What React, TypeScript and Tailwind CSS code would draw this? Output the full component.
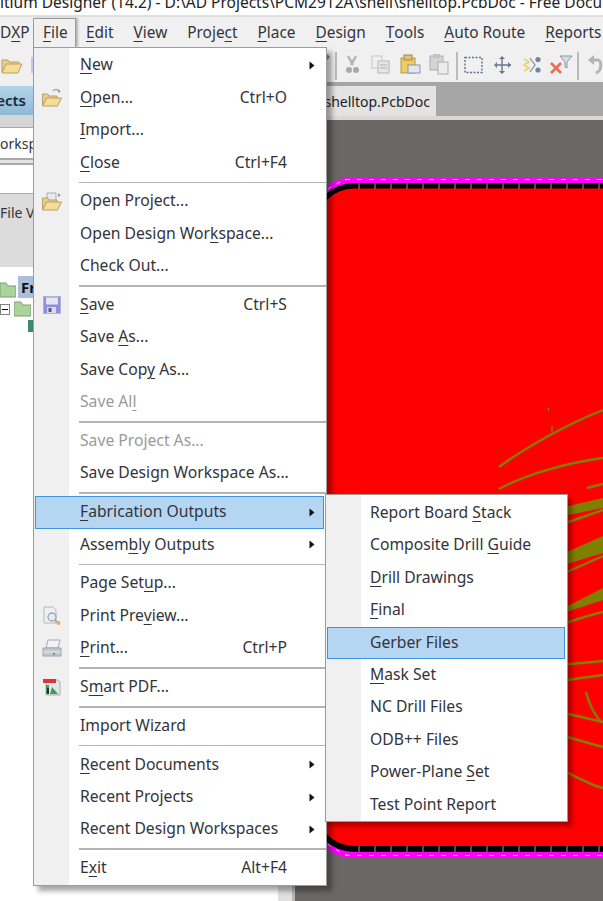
import React from 'react';

const FONT = "font-['Noto_Sans',sans-serif]";

// "&" marks the mnemonic letter, same as the win32 menu resource strings
function Label({ text }: { text: string }) {
    const i = text.indexOf('&');
    if (i < 0) return <>{text}</>;
    return (
        <>
            {text.slice(0, i)}
            <span className="underline decoration-1 underline-offset-[3px]">{text[i + 1]}</span>
            {text.slice(i + 2)}
        </>
    );
}

function FolderOpen({ project }: { project?: boolean }) {
    return (
        <svg width="22" height="20" viewBox="0 0 22 20">
            {project ? (
                <path d="M6 1h9v9H6z" fill="#e8eaf0" stroke="#a9adb8" />
            ) : (
                <path d="M12 3c2-2 4-2 6 0" fill="none" stroke="#a8a8a8" strokeWidth="1.4" />
            )}
            <path d="M17 1l3 2.5-3 1.5z" fill="#9a9a9a" />
            <path d="M1.5 18V6h5l1.5 2h8v3" fill="#e5cd8f" stroke="#b7a069" />
            <path d="M1.5 18l4-8h15l-4 8z" fill="#f6dd95" stroke="#b7a069" />
        </svg>
    );
}

function Floppy() {
    return (
        <svg width="18" height="18" viewBox="0 0 18 18">
            <rect x="0.5" y="0.5" width="17" height="17" fill="#8f8fd8" stroke="#b2b2dc" />
            <rect x="3" y="1.5" width="12" height="7" fill="#e6e6f2" />
            <rect x="4" y="11" width="9" height="6" fill="#d8d8e6" />
            <rect x="5.5" y="12" width="3" height="4" fill="#55558a" />
        </svg>
    );
}

function PrintPreview() {
    return (
        <svg width="20" height="20" viewBox="0 0 20 20">
            <path d="M2 1h9l3 3v13H2z" fill="#eef0f4" stroke="#b4b8c0" />
            <circle cx="10" cy="11" r="4" fill="#e6ebf2" stroke="#a0a5ad" strokeWidth="1.3" />
            <path d="M13 14l3 3" stroke="#a0a5ad" strokeWidth="2" />
            <circle cx="16.5" cy="17" r="2" fill="#eab04a" />
        </svg>
    );
}

function Printer() {
    return (
        <svg width="20" height="19" viewBox="0 0 20 19">
            <path d="M6 1h12l-2 8H4z" fill="#f0f2f6" stroke="#a4aab4" />
            <path d="M1 9h18v8H1z" fill="#c4cad3" stroke="#99a0aa" />
            <path d="M1 13h18" stroke="#e4e7ec" />
            <rect x="11" y="14" width="2" height="1.5" fill="#5c7f5c" />
        </svg>
    );
}

function SmartPdf() {
    return (
        <svg width="18" height="18" viewBox="0 0 18 18">
            <path d="M3 2h12l2 2v13H3z" fill="#dfe8e0" stroke="#a8b0aa" />
            <rect x="0" y="1" width="13" height="4" fill="#d9353a" />
            <path d="M3 16V7h3v9zM7 16l2-7 6 7z" fill="#3f9a5a" />
            <path d="M4 16v-6h2v6z" fill="#23352a" />
        </svg>
    );
}

function Arrow() {
    return (
        <svg width="6" height="9" viewBox="0 0 6 9">
            <path d="M0.5 0.5L5.5 4.5L0.5 8.5z" fill="#111" />
        </svg>
    );
}

type Row = {
    text?: string;
    key?: string;
    sub?: boolean;
    off?: boolean;
    active?: boolean;
    icon?: React.ReactNode;
};

const fileItems: (Row | null)[] = [
    { text: '&New', sub: true },
    { text: '&Open...', key: 'Ctrl+O', icon: <FolderOpen /> },
    { text: '&Import...' },
    { text: '&Close', key: 'Ctrl+F4' },
    null,
    { text: 'Open Project...', icon: <FolderOpen project /> },
    { text: 'Open Design Wor&kspace...' },
    { text: 'Check Out...' },
    null,
    { text: '&Save', key: 'Ctrl+S', icon: <Floppy /> },
    { text: 'Save &As...' },
    { text: 'Save Cop&y As...' },
    { text: 'Save Al&l', off: true },
    null,
    { text: 'Save Project As...', off: true },
    { text: 'Save Design Workspace As...' },
    null,
    { text: '&Fabrication Outputs', sub: true, active: true },
    { text: 'Assem&bly Outputs', sub: true },
    null,
    { text: 'Page Set&up...' },
    { text: 'Print Pre&view...', icon: <PrintPreview /> },
    { text: '&Print...', key: 'Ctrl+P', icon: <Printer /> },
    null,
    { text: 'S&mart PDF...', icon: <SmartPdf /> },
    null,
    { text: 'Import Wizard' },
    null,
    { text: '&Recent Documents', sub: true },
    { text: 'Recent Projects', sub: true },
    { text: 'Recent Design Workspaces', sub: true },
    null,
    { text: 'E&xit', key: 'Alt+F4' },
];

const fabItems: Row[] = [
    { text: 'Report Board &Stack' },
    { text: 'Composite Drill &Guide' },
    { text: '&Drill Drawings' },
    { text: '&Final' },
    { text: 'Gerber Files', active: true },
    { text: '&Mask Set' },
    { text: 'NC Drill Files' },
    { text: 'ODB++ Files' },
    { text: 'Power-Plane &Set' },
    { text: 'Test Point Report' },
];

function MenuRow({ row, gutter }: { row: Row; gutter: number }) {
    return (
        <div className="relative flex h-[32.42px] items-center">
            {row.active && (
                <div className="absolute inset-y-0 left-[1px] right-[2px] border-[1.5px] border-[#3d93e0] bg-[#b5d6f3]" />
            )}
            <div className="relative flex h-full shrink-0 items-center justify-center" style={{ width: gutter }}>
                {row.icon}
            </div>
            <div className={`relative ml-[11px] flex-1 whitespace-nowrap pb-[1px] ${row.off ? 'text-[#9a9a9a]' : 'text-[#33343a]'}`}>
                <Label text={row.text || ''} />
            </div>
            {row.key && <div className="relative mr-[39px] pb-[1px] text-[#33343a]">{row.key}</div>}
            {row.sub && (
                <div className="relative mr-[11px] flex items-center">
                    <Arrow />
                </div>
            )}
        </div>
    );
}

function FileMenu() {
    return (
        <div className="absolute left-[33px] top-[47px] w-[294px] border border-[#9b9b9b] bg-[linear-gradient(to_right,#f0f0f0_35px,#ffffff_35px)] pt-[1.5px] pb-[0.5px] text-[15.7px] shadow-[5px_5px_5px_rgba(0,0,0,0.35)]">
            {fileItems.map((row, i) =>
                row ? (
                    <MenuRow key={i} row={row} gutter={35} />
                ) : (
                    <div key={i} className="flex h-[6.4px] items-center pl-[45px]">
                        <div className="h-[1.5px] w-full bg-[#b4b4b4]" />
                    </div>
                ),
            )}
        </div>
    );
}

function FabMenu() {
    return (
        <div className="absolute left-[325px] top-[494px] w-[243px] border border-[#9b9b9b] bg-[linear-gradient(to_right,#f0f0f0_35px,#ffffff_35px)] pt-[2px] text-[15.7px] shadow-[4px_4px_5px_rgba(0,0,0,0.35)]">
            {fabItems.map((row, i) => (
                <MenuRow key={i} row={row} gutter={33} />
            ))}
        </div>
    );
}

function MenuBar() {
    const names = ['&Edit', '&View', 'Proje&ct', '&Place', '&Design', '&Tools', '&Auto Route', '&Reports'];
    return (
        <div className="flex h-[32px] items-end border-t-2 border-[#e0e0e0] bg-[#f0f0f0] text-[15.4px] text-[#33343a]">
            <div className="flex h-[29px] w-[33px] shrink-0 items-center">
                <Label text="D&XP" />
            </div>
            <div className="flex h-[29px] w-[43px] shrink-0 items-center border border-b-0 border-[#9b9b9b] pl-[9px] shadow-[2px_0_2px_rgba(0,0,0,0.25)]">
                <Label text="&File" />
            </div>
            {names.map((n) => (
                <div key={n} className="flex h-[29px] shrink-0 items-center whitespace-nowrap px-[10px]">
                    <Label text={n} />
                </div>
            ))}
        </div>
    );
}

function ToolbarIcons() {
    return (
        <svg className="absolute left-0 top-0" width="603" height="35" viewBox="0 47 603 35">
            {/* left of the dropdown */}
            <path d="M2 72V60h6l1 2h10v2" fill="#e5cd8f" stroke="#b7a069" />
            <path d="M2 73l4-9h16l-4 9z" fill="#f6dd95" stroke="#b7a069" />
            <rect x="31" y="57" width="3" height="16" fill="#c8c4ea" />
            <path d="M327 54l3 3-3 3z" fill="#8b8b8b" />
            {/* separators */}
            <path d="M336 52v28M457 52v28M578 52v28" stroke="#a8a8a8" strokeWidth="1.5" />
            {/* cut */}
            <path d="M348 56l5 9M356 56l-5 9" stroke="#b4b4b4" strokeWidth="2.5" />
            <circle cx="349" cy="70" r="3" fill="#a8a8a8" />
            <circle cx="356" cy="70" r="3" fill="#a8a8a8" />
            {/* copy */}
            <rect x="372" y="56" width="10" height="12" fill="#f0f0f0" stroke="#c4c4c4" />
            <rect x="378" y="61" width="11" height="12" fill="#e6e6e6" stroke="#b5b5b5" />
            <path d="M380 65h7M380 68h7" stroke="#b0b0b0" />
            {/* paste */}
            <rect x="401" y="58" width="14" height="15" fill="#efcb63" stroke="#b79a4a" />
            <rect x="404" y="55" width="8" height="5" fill="#d9c27a" stroke="#a08a4a" />
            <rect x="408" y="65" width="12" height="8" fill="#dfe6f0" stroke="#8b95a5" />
            {/* paste disabled */}
            <rect x="430" y="56" width="13" height="14" fill="#d4d4d4" stroke="#b0b0b0" />
            <rect x="433" y="54" width="7" height="4" fill="#c4c4c4" />
            <rect x="438" y="62" width="10" height="12" fill="#ececec" stroke="#acacac" />
            {/* marquee */}
            <rect x="465" y="57.5" width="17" height="15" fill="none" stroke="#5f6f8f" strokeWidth="1.4" strokeDasharray="2 1.5" />
            {/* move */}
            <path d="M502 57v16M495 65h16" stroke="#66788f" strokeWidth="1.4" />
            <path d="M502 56l-3 3h6zM502 74l-3-3h6zM494 65l3-3v6zM511 65l-3-3v6z" fill="#66788f" />
            {/* cross select */}
            <path d="M524 59l5 3-5 3 5 3-5 3" fill="none" stroke="#e6d77a" strokeWidth="2" />
            <path d="M530 58l5 7-5 7" fill="none" stroke="#7c8ea8" strokeWidth="1.2" />
            <circle cx="538" cy="59.5" r="2.6" fill="#6f85a6" />
            <circle cx="538" cy="70" r="2.6" fill="#6f85a6" />
            {/* clear filter */}
            <path d="M551 63l10 10M561 63l-10 10" stroke="#ee6a50" strokeWidth="2.6" />
            <path d="M560 56h12l-5 6v6l-2-1v-5z" fill="#d5dee8" stroke="#8a97a6" />
            {/* undo */}
            <path d="M590 60h8c4 0 4 11-2 13" fill="none" stroke="#b4b4b4" strokeWidth="3" />
            <path d="M594 55v10l-6-5z" fill="#b4b4b4" />
        </svg>
    );
}

function LeftPanel() {
    return (
        <div className="flex w-[278px] shrink-0 flex-col overflow-hidden bg-white text-[15px] text-[#33343a]">
            <div className="h-[4px] bg-[#f0f0f0]" />
            <div className="flex h-[29px] items-center justify-end bg-[linear-gradient(#b3d3e8,#8fb9d6)] pr-[252px] font-semibold text-[#1c2b3a]">
                ects
            </div>
            <div className="h-[13px] border-b border-[#a8a8a8] bg-[#d6d6d6]" />
            <div className="flex h-[30px] items-center overflow-hidden whitespace-nowrap bg-white text-[14px]">
                orkspace
            </div>
            <div className="h-[7px] border-y-2 border-[#a8a8a8] bg-[#e2e2e2]" />
            <div className="h-[28px] bg-white" />
            <div className="h-[74px] border-t border-[#a8a8a8] bg-[#dcdcdc] pt-[8px] text-[14px]">
                File Vi
            </div>
            <div className="flex h-[32px] items-end gap-[2px] pb-[1px]">
                <svg width="16" height="16" viewBox="0 0 16 16">
                    <path d="M0 15V1h6l2 3h8v11z" fill="#a9d49a" stroke="#7f9a74" />
                </svg>
                <div className="flex h-[22px] w-[60px] items-center bg-[#a8c0dc] pl-[3px] font-bold text-[#111]">Fr</div>
            </div>
            <div className="flex h-[20px] items-center gap-[4px]">
                <div className="flex h-[11px] w-[10px] items-center justify-center border border-[#808080] bg-white">
                    <div className="h-[1px] w-[6px] bg-black" />
                </div>
                <svg width="17" height="16" viewBox="0 0 17 16">
                    <path d="M0 15V1h7l2 3h8v11z" fill="#a9d49a" stroke="#7f9a74" />
                </svg>
            </div>
            <div className="pl-[28px] pt-[1px]">
                <div className="h-[12px] w-[10px] bg-[#3e8a6a]" />
            </div>
        </div>
    );
}

function Board() {
    const ticks: number[] = [];
    for (let x = 359; x < 603; x += 16) ticks.push(x);
    return (
        <svg className="absolute inset-0" width="308" height="781" viewBox="295 120 308 781">
            <rect x="295" y="120" width="308" height="781" fill="#6b6767" />
            {/* keepout outline */}
            <rect x="308" y="177" width="340" height="681" rx="46" fill="#ff00ff" />
            <rect x="312" y="183" width="340" height="669" rx="42" fill="#000" />
            <rect x="316" y="188.5" width="340" height="657.5" rx="38" fill="#ff0000" />
            {ticks.map((x) => (
                <path key={x} d={`M${x} 183v6M${x} 846v6`} stroke="#9a9a9a" />
            ))}
            <path d="M345 179.5H603M345 855.5H603" stroke="#ffc8ff" strokeWidth="1" strokeDasharray="5 7" />
            <path d="M328 189q8-6 18-9M328 844q8 7 20 11" fill="none" stroke="#ffc8ff" strokeDasharray="4 6" />

            {/* copper on the far side */}
            <g fill="#808000" stroke="none">
                <path d="M560 508L603 498V508L568 515L560 517z" />
                <path d="M560 555L603 536V553L560 566z" />
                <path d="M560 610L603 588V600L560 614z" />
            </g>
            <g fill="none" stroke="#808000" strokeWidth="2.4">
                <path d="M548 408l1 3M552 426v6" strokeWidth="1.4" />
                <path d="M499 467C525 448 565 425 603 410" />
                <path d="M499 489C525 475 565 463 603 458" />
                <path d="M587 488l16-4" />
                <path d="M560 525L603 510" />
                <path d="M560 575L603 556" />
                <path d="M560 625C580 618 590 615 603 612" />
                <path d="M560 665L603 661" />
                <path d="M560 681L603 675" />
                <path d="M560 712L603 722" />
                <path d="M586 692C589 704 594 714 601 722" />
                <path d="M560 735L603 747" />
                <path d="M560 769C575 776 590 785 603 788" />
            </g>
        </svg>
    );
}

export default function App() {
    return (
        <div className={`relative flex h-[901px] w-[603px] flex-col overflow-hidden bg-white ${FONT}`}>
            <div className="h-[15px] overflow-hidden whitespace-nowrap bg-white text-[15.5px] leading-[15px] text-[#222]">
                <div className="-mt-[5px]">ltium Designer (14.2) - D:\AD Projects\PCM2912A\shell\shelltop.PcbDoc - Free Documents</div>
            </div>
            <MenuBar />
            <div className="relative h-[35px] shrink-0 bg-[#f0f0f0]">
                <ToolbarIcons />
            </div>
            <div className="flex min-h-0 flex-1">
                <LeftPanel />
                <div className="w-[17px] shrink-0 border-r-[3px] border-[#b8b8b8] bg-[#e0e0e0]" />
                <div className="flex min-w-0 flex-1 flex-col">
                    <div className="flex h-[38px] shrink-0 flex-col bg-[#a6a6a6]">
                        <div className="mt-[4px] flex h-[30px] w-[141px] items-center justify-end bg-[#e3e3e3] pr-[6px] text-[14px] text-[#222]">
                            shelltop.PcbDoc
                        </div>
                        <div className="h-[4px] bg-[#d9d9d9]" />
                    </div>
                    <div className="relative flex-1">
                        <Board />
                    </div>
                </div>
            </div>
            <FileMenu />
            <FabMenu />
        </div>
    );
}
